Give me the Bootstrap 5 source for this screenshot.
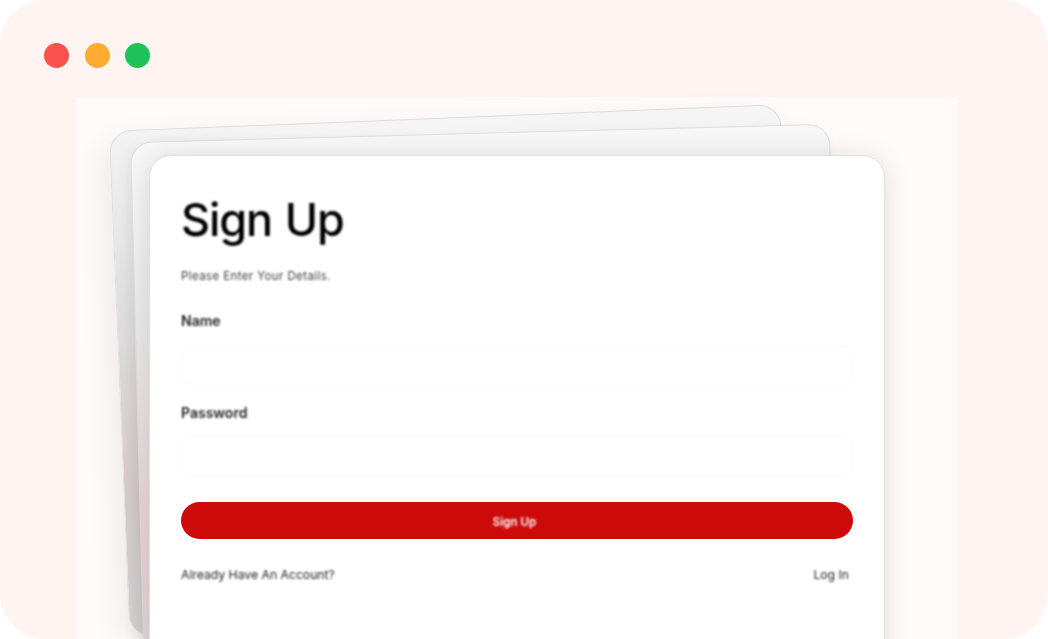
<!DOCTYPE html>
<html lang="en">
<head>
<meta charset="utf-8">
<title>Sign Up</title>
<link href="https://cdn.jsdelivr.net/npm/bootstrap@5.3.0/dist/css/bootstrap.min.css" rel="stylesheet">
<style>
html,body{height:100%;margin:0;background:#fff;overflow:hidden}
body{font-family:Inter,"Noto Sans",sans-serif}
.shell{width:1048px;height:639px;background:#fff4f2;border-radius:45px;overflow:hidden;padding:43px 0 0 44px}
.dots{gap:15.5px;height:25px}
.dot{width:25px;height:25px;border-radius:50%}
.dot-r{background:#fb524d}.dot-y{background:#feac32}.dot-g{background:#1fc259}
.stage{position:relative;margin:29px 0 0 32px;width:881px;height:600px;background:#fffbfa;padding:58px 0 0 73px}
.sheet{position:absolute;transform-origin:top left;border:1px solid #dedede;border-radius:22px}
.sheet-a{left:33px;top:34px;width:672px;height:506px;transform:rotate(-2.3deg);background:linear-gradient(90deg,transparent 0,transparent 7%,#f5f5f5 30%),linear-gradient(180deg,#f3f3f3 0,#dedede 35%,#d4c9cb 72%,#d2d1d1 100%);box-shadow:-8px 10px 30px rgba(0,0,0,.07)}
.sheet-b{left:54px;top:45px;width:700px;height:560px;transform:rotate(-1.5deg);background:linear-gradient(90deg,transparent 0,transparent 4%,#f7f7f7 25%),linear-gradient(180deg,#f8f8f8 0,#e8e8e8 35%,#e8d2d5 72%,#ddd8d9 100%);box-shadow:-3px 3px 14px rgba(40,20,20,.06)}
.front{position:relative;width:736px;height:600px;background:#fff;border:1px solid #e2dfdf;border-radius:22px;box-shadow:0 2px 26px rgba(40,20,20,.13);padding:36px 31px 0 31px}
.front .card-body{padding:0}
.txt{filter:blur(.8px)}
.heading{font-size:45px;font-weight:500;line-height:56px;color:#000;margin:0;letter-spacing:-1.1px;word-spacing:2px}
.sub{font-size:11.5px;line-height:14px;color:#3c3c3c;margin:21px 0 0;letter-spacing:.4px}
.lbl{display:block;font-size:14px;font-weight:600;line-height:18px;color:#222;margin:0}
.lbl-a{margin-top:29px}
.lbl-b{margin-top:19px}
.fld{height:40px;margin-top:15px;border:1px solid #fbfbfb;border-radius:12px;background:#fff;box-shadow:none}
.fld-b{margin-top:14px}
.go{display:block;width:100%;height:37px;margin-top:26px;padding:1px 5px 0 0;background:#cc0a0a;border:0;border-radius:19px;color:#fff;font-size:11.5px;font-weight:600;line-height:38px}
.go span{display:inline-block}
.foot{margin-top:27px;padding-right:4px;font-size:12.2px;line-height:18px;color:#222}
.foot a{color:#222;text-decoration:none}
</style>
</head>
<body>
<div class="shell">
  <div class="d-flex dots">
    <div class="dot dot-r"></div>
    <div class="dot dot-y"></div>
    <div class="dot dot-g"></div>
  </div>
  <div class="stage">
    <div class="sheet sheet-a"></div>
    <div class="sheet sheet-b"></div>
    <div class="card front">
      <div class="card-body">
        <h1 class="heading txt">Sign Up</h1>
        <p class="sub txt">Please Enter Your Details.</p>
        <form>
          <label class="lbl lbl-a txt" for="n">Name</label>
          <input id="n" class="form-control fld" type="text">
          <label class="lbl lbl-b txt" for="p">Password</label>
          <input id="p" class="form-control fld fld-b" type="password">
          <button type="button" class="btn go"><span class="txt">Sign Up</span></button>
        </form>
        <div class="d-flex justify-content-between foot txt">
          <span>Already Have An Account?</span>
          <a href="#">Log In</a>
        </div>
      </div>
    </div>
  </div>
</div>
<script src="https://cdn.jsdelivr.net/npm/bootstrap@5.3.0/dist/js/bootstrap.bundle.min.js"></script>
</body>
</html>
